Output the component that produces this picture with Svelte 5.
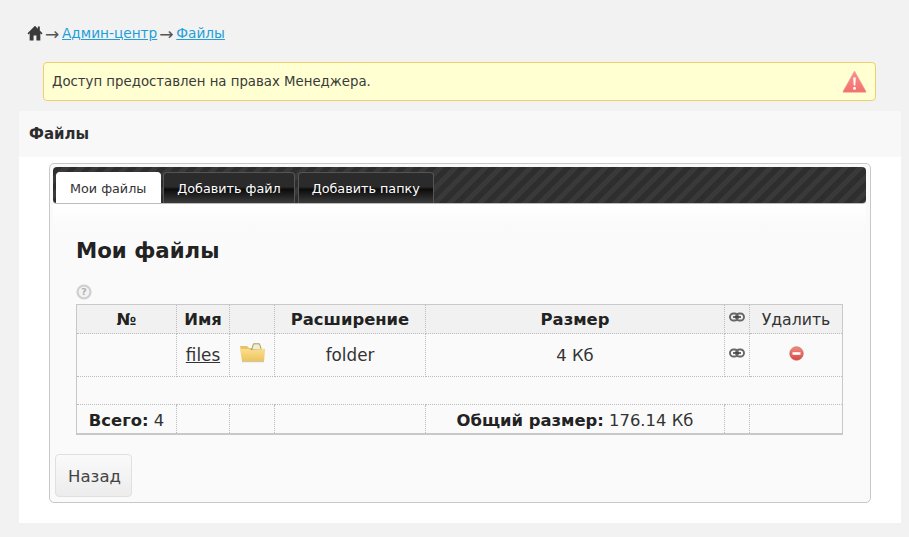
<script>
	const crumbs = ['Админ-центр', 'Файлы'];
	const tabs = ['Мои файлы', 'Добавить файл', 'Добавить папку'];
</script>

{#snippet chain()}
	<svg class="chain" width="16" height="10" viewBox="0 0 16 10">
		<rect x="1" y="1.500" width="8" height="7" rx="3.500" fill="none" stroke="#666" stroke-width="1.900" />
		<rect x="7" y="1.500" width="8" height="7" rx="3.500" fill="none" stroke="#666" stroke-width="1.900" />
		<path d="M4 5h8" stroke="#444" stroke-width="1.600" />
	</svg>
{/snippet}

<div class="page">
	<nav class="crumbs">
		<svg class="home" width="16" height="16" viewBox="0 0 18 16" preserveAspectRatio="none">
			<path d="M9 .8 0.600 8.200l1 1.200L3 8.200V15.500h4.400v-5h3.200v5H15V8.200l1.400 1.200 1-1.200-3-2.600V1.600h-2.200v2.100z" fill="#3a3a3a" />
		</svg>
		{#each crumbs as crumb}
			<span class="arrow">→</span><a href="#top">{crumb}</a>
		{/each}
	</nav>

	<div class="notice">
		<span>Доступ предоставлен на правах Менеджера.</span>
		<svg width="25" height="23" viewBox="0 0 25 23">
			<defs>
				<linearGradient id="warn" x1="0" y1="0" x2="0" y2="1">
					<stop offset="0" stop-color="#f79090" />
					<stop offset="1" stop-color="#f36f6a" />
				</linearGradient>
			</defs>
			<path d="M12.500 1 24 21.500a.6.6 0 0 1-.5.8H1.500a.6.6 0 0 1-.5-.8z" fill="url(#warn)" stroke="#f2a09c" stroke-width=".6" />
			<path d="M11.200 7.500h2.600l-.5 8h-1.600z" fill="#fff" />
			<circle cx="12.500" cy="18.200" r="1.500" fill="#fff" />
		</svg>
	</div>

	<section class="section">
		<h2>Файлы</h2>
		<div class="body">
			<div class="panel">
				<div class="tabs">
					{#each tabs as tab, i}
						<button class="tab" class:active={i === 0} type="button">{tab}</button>
					{/each}
				</div>

				<div class="content">
					<h1>Мои файлы</h1>
					<svg class="help" width="16" height="16" viewBox="0 0 16 16">
						<circle cx="8" cy="8" r="7.600" fill="#cfcfcf" />
						<circle cx="8" cy="8" r="5.400" fill="#f2f2f2" />
						<text x="8" y="11.200" text-anchor="middle" class="help-mark">?</text>
					</svg>

					<table>
						<colgroup>
							<col style="width:100px" />
							<col style="width:53px" />
							<col style="width:45px" />
							<col style="width:151px" />
							<col style="width:299px" />
							<col style="width:25px" />
							<col />
						</colgroup>
						<thead>
							<tr>
								<th>№</th>
								<th>Имя</th>
								<th></th>
								<th>Расширение</th>
								<th>Размер</th>
								<th class="link-cell">{@render chain()}</th>
								<th class="plain">Удалить</th>
							</tr>
						</thead>
						<tbody>
							<tr class="file">
								<td></td>
								<td class="latin"><a href="#top">files</a></td>
								<td>
									<svg class="folder" width="27" height="20" viewBox="0 0 27 20">
										<defs>
											<linearGradient id="fold" x1="0" y1="0" x2="0" y2="1">
												<stop offset="0" stop-color="#fbe08e" />
												<stop offset="1" stop-color="#eec35f" />
											</linearGradient>
										</defs>
										<path d="M1 3h7l2 2h10v3H2z" fill="#e8c468" />
										<path d="M12.500 7 14.500 .8h6L22.500 7z" fill="#f3eccf" stroke="#a89968" stroke-width="1" />
										<path d="M1 6h9l2 1.200 8-.6 6.200-1.200-1.200 12.600H3z" fill="url(#fold)" />
										<rect x="3" y="18" width="22" height="1.200" fill="#cfc6a8" />
									</svg>
								</td>
								<td class="latin">folder</td>
								<td>4 Кб</td>
								<td class="link-cell">{@render chain()}</td>
								<td>
									<svg class="remove" width="15" height="15" viewBox="0 0 15 15">
										<defs>
											<linearGradient id="stop" x1="0" y1="0" x2="0" y2="1">
												<stop offset="0" stop-color="#f08a82" />
												<stop offset="1" stop-color="#d94a40" />
											</linearGradient>
										</defs>
										<circle cx="7.500" cy="7.500" r="6.800" fill="url(#stop)" stroke="#c9605a" stroke-width=".6" />
										<rect x="3.500" y="6.200" width="8" height="2.600" fill="#fff" />
									</svg>
								</td>
							</tr>
							<tr class="blank"><td colspan="7"></td></tr>
						</tbody>
						<tfoot>
							<tr>
								<td><b>Всего:</b> 4</td>
								<td></td>
								<td></td>
								<td></td>
								<td><b>Общий размер:</b> 176.14 Кб</td>
								<td></td>
								<td></td>
							</tr>
						</tfoot>
					</table>

					<button class="back" type="button">Назад</button>
				</div>
			</div>
		</div>
	</section>
</div>

<style>
	:global(body) {
		background: #f2f2f2;
		color: #222;
		font-family: 'DejaVu Sans', sans-serif;
	}

	.page {
		height: 537px;
		padding: 24px 8px 0 19px;
		box-sizing: border-box;
		overflow: hidden;
	}

	.crumbs {
		display: flex;
		align-items: center;
		height: 18px;
		padding-left: 8px;
		font-size: 13.7px;
	}

	.home {
		margin-right: 2px;
	}

	.arrow {
		color: #555;
		width: 17px;
		font-size: 17px;
		line-height: 18px;
		margin-top: 1px;
	}

	.crumbs a {
		color: #1e9fd8;
		text-decoration: underline;
		margin-right: 2px;
	}

	.notice {
		display: flex;
		align-items: center;
		justify-content: space-between;
		box-sizing: border-box;
		width: 833px;
		height: 39px;
		margin: 20px 0 10px 24px;
		padding: 0 8px 0 8px;
		background: #ffffd2;
		border: 1px solid #edd06e;
		border-radius: 4px;
		font-size: 13.3px;
		color: #3a3a3a;
	}

	.section {
		width: 882px;
		background: #fff;
		height: 412px;
	}

	h2 {
		margin: 0;
		height: 46px;
		line-height: 46px;
		padding-left: 10px;
		background: #f8f8f8;
		font-size: 15px;
		font-weight: bold;
		color: #2c2c2c;
	}

	.body {
		padding: 6px 30px 0;
	}

	.panel {
		box-sizing: border-box;
		height: 340px;
		padding: 3px 4px 3px 3px;
		background: #fafafa;
		border: 1px solid #c8c8c8;
		border-radius: 5px;
	}

	.tabs {
		display: flex;
		align-items: flex-end;
		gap: 3px;
		height: 37px;
		box-sizing: border-box;
		padding: 0 0 0 3px;
		border-radius: 4px;
		background: repeating-linear-gradient(-45deg, #2e2e2e 0 5.300px, #393939 5.300px 10.600px);
		border-bottom: 1px solid #bbb;
	}

	.tab {
		height: 31px;
		padding: 1px 13px 0;
		border: 1px solid #555;
		border-bottom: none;
		border-radius: 4px 4px 0 0;
		background: linear-gradient(#2b2b2b 0 45%, #0c0c0c 55%, #3c3c3c);
		color: #fff;
		font: 12.75px 'DejaVu Sans', sans-serif;
	}

	.tab.active {
		padding-right: 14px;
		margin-right: -1px;
		background: #fff;
		border-color: #fff;
		color: #333;
	}

	.content {
		padding: 0 23px;
		background: linear-gradient(#fff, #fafafa 24px);
	}

	h1 {
		margin: 0;
		padding-top: 33px;
		height: 47px;
		line-height: 27px;
		font-size: 21.3px;
		font-weight: bold;
		color: #222;
	}

	.help {
		display: block;
		margin: 0 0 4px 0;
	}

	.help-mark {
		font-size: 9.500px;
		font-weight: bold;
		fill: #b0b0b0;
	}

	table {
		width: 767px;
		table-layout: fixed;
		border-collapse: collapse;
		border: 2px solid #c8c8c8;
		border-width: 1px 1px 2px;
		font-size: 16.4px;
		text-align: center;
		color: #333;
	}

	th,
	td {
		padding: 0;
		border: 1px dotted #bcbcbc;
	}

	th {
		height: 27px;
		padding-top: 1px;
		background: #f1f1f1;
		font-weight: bold;
		color: #222;
	}

	th.plain {
		font-size: 15.7px;
		font-weight: normal;
		color: #333;
	}

	.file td {
		height: 42px;
	}

	.file .latin {
		font-size: 16.8px;
	}

	.file a {
		color: #333;
		text-decoration: underline;
	}

	.blank td {
		height: 27px;
	}

	tfoot td {
		height: 26px;
		padding-top: 2px;
	}

	b {
		color: #222;
	}

	.folder,
	.remove,
	.chain {
		display: block;
		margin: 0 auto;
	}

	.folder {
		margin-top: -4px;
	}

	.remove {
		margin-top: -4px;
	}

	th .chain {
		margin-top: -5px;
	}

	.file .chain {
		margin-top: -4px;
	}

	.back {
		display: block;
		margin: 19px 0 0 -21px;
		width: 77px;
		height: 43px;
		padding: 2px 0 0 2px;
		border: 1px solid #e0e0e0;
		border-radius: 4px;
		background: linear-gradient(#fafafa, #ececec);
		color: #444;
		font: 16.5px 'DejaVu Sans', sans-serif;
	}
</style>
